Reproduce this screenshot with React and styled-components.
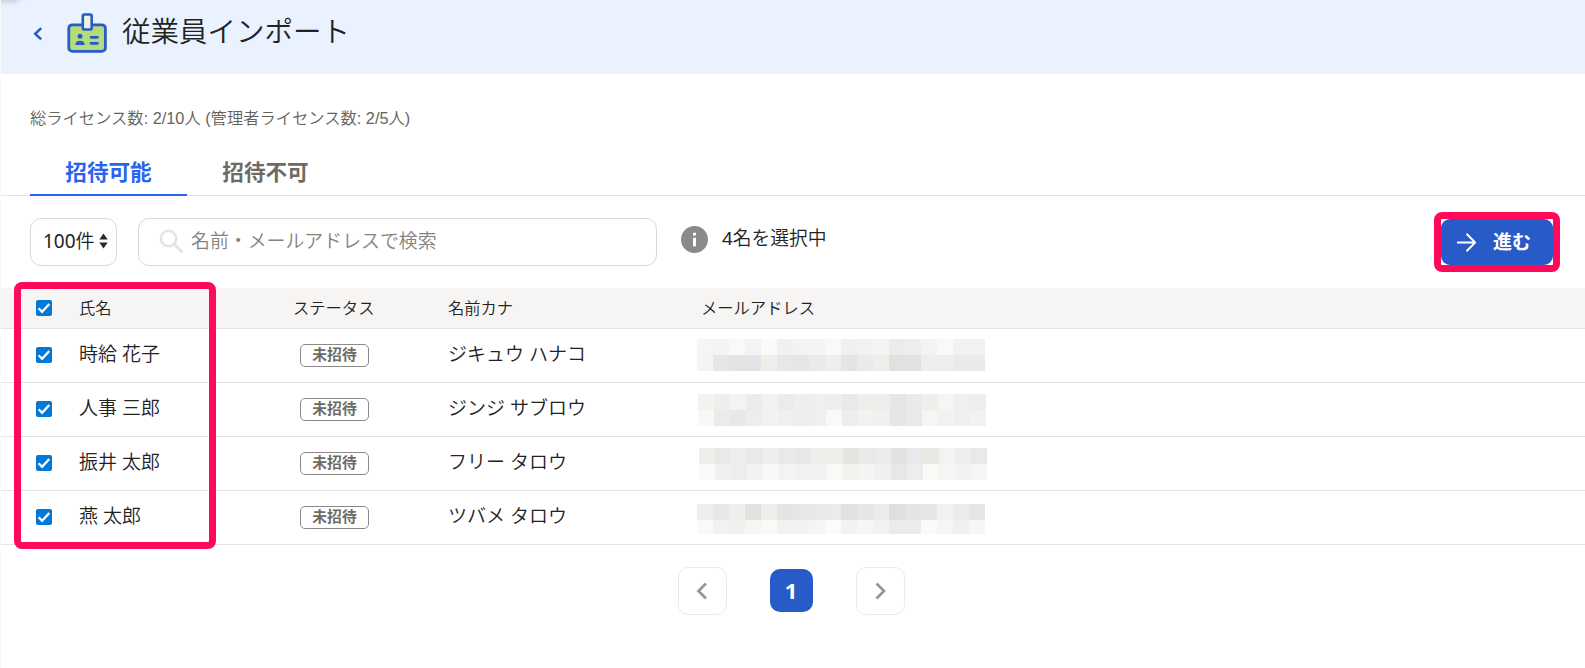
import React from "react";
import styled, { createGlobalStyle } from "styled-components";

const GlobalStyle = createGlobalStyle`
  * { box-sizing: border-box; }
  body {
    margin: 0;
    background: #fff;
    color: #23221f;
    font-family: "Noto Sans", "Noto Sans CJK JP", sans-serif;
    font-size: 19px;
    font-weight: 350;
  }
`;

const Page = styled.main`
  position: relative;
  height: 668px;
  overflow: hidden;
  border-left: 1px solid #f8f8f9;
`;

const Header = styled.header`
  display: flex;
  align-items: center;
  height: 74px;
  padding-left: 32px;
  background: #eaf2ff;
`;

const CornerShadow = styled.div`
  position: absolute;
  top: -6px;
  left: -10px;
  width: 28px;
  height: 6px;
  border-radius: 4px;
  box-shadow: 0 0 6px rgba(40, 50, 70, 0.35);
`;

const BackIcon = styled.svg`
  margin-top: -7px;
`;

const BadgeIcon = styled.svg`
  margin: -8px 0 0 24px;
`;

const Title = styled.h1`
  margin: -12px 0 0 15px;
  font-size: 28.5px;
  font-weight: 350;
  line-height: 40px;
`;

const License = styled.p`
  margin: 32px 0 0 29px;
  color: #66635c;
  font-family: "Liberation Sans", "Noto Sans CJK JP", sans-serif;
  font-size: 16.3px;
  line-height: 24px;
`;

const Tabs = styled.nav`
  display: flex;
  height: 48px;
  margin-top: 18px;
  padding-left: 29px;
  box-shadow: inset 0 -1px #e3e3e3;
`;

const Tab = styled.div`
  width: 157px;
  padding-top: 8px;
  border-bottom: 2px solid ${(p) => (p.$active ? "#2864f0" : "transparent")};
  color: ${(p) => (p.$active ? "#2864f0" : "#6e6b65")};
  font-size: 21.6px;
  font-weight: 700;
  line-height: 32px;
  text-align: center;
`;

const Toolbar = styled.div`
  display: flex;
  align-items: center;
  height: 92px;
  padding: 0 32px 0 29px;
`;

const Field = styled.div`
  display: flex;
  align-items: center;
  width: ${(p) => p.$width}px;
  height: 48px;
  border: 1px solid #d9d9d9;
  border-radius: 11px;
  line-height: 28px;
`;

const PageSize = styled(Field)`
  padding: 0 0 2px 12px;
  gap: 4px;
`;

const Digits = styled.span`
  font-weight: 400;
`;

const Search = styled(Field)`
  margin-left: 21px;
  padding: 0 0 2px 20px;
  gap: 7px;
  color: #85827f;
  font-size: 18.9px;
`;

const Selection = styled.div`
  display: flex;
  align-items: center;
  gap: 14px;
  margin: -5px auto 0 24px;
  font-size: 18.8px;
  line-height: 28px;
`;

const SelectionText = styled.span`
  margin-top: -3px;
`;

const NextButton = styled.div`
  display: flex;
  align-items: center;
  position: relative;
  width: 112px;
  height: 46px;
  padding-left: 16px;
  gap: 17px;
  border-radius: 9px;
  background: #285ac8;
  color: #fff;
  font-weight: 700;
  line-height: 28px;
`;

const Highlight = styled.div`
  position: absolute;
  top: ${(p) => p.$top}px;
  left: ${(p) => p.$left}px;
  width: ${(p) => p.$width}px;
  height: ${(p) => p.$height}px;
  border: 7px solid #ff0a5a;
  border-radius: 8px;
`;

const Row = styled.div`
  display: grid;
  grid-template-columns: 43px 191px 178px 253px 1fr;
  align-items: center;
  height: 54px;
  padding-left: 35px;
  padding-bottom: 1px;
  border-bottom: 1px solid #e3e3e5;
`;

const HeadRow = styled(Row)`
  height: 41px;
  background: #f7f5f4;
  font-size: 16.3px;
`;

const Cell = styled.div`
  margin-top: -3px;
  line-height: 28px;
`;

const HeadCell = styled.div`
  padding-left: ${(p) => p.$indent || 0}px;
  line-height: 24px;
`;

const Check = styled.div`
  display: flex;
  width: 16px;
  height: 16px;
  border-radius: 2px;
  background: #0078d7;
`;

const Status = styled.div`
  width: 69px;
  height: 23px;
  margin: 1px 0 0 30px;
  border: 1px solid #8c8989;
  border-radius: 5px;
  color: #6e6b65;
  font-size: 14.8px;
  font-weight: 700;
  line-height: 19px;
  text-align: center;
`;

const Mosaic = styled.div`
  display: grid;
  grid-template-columns: repeat(18, 16px);
  grid-template-rows: 16px ${(p) => p.$second}px;
  margin: ${(p) => p.$top}px 0 0 ${(p) => p.$left}px;
`;

const Tile = styled.span`
  background: ${(p) => p.$color};
`;

const Pagination = styled.div`
  display: flex;
  align-items: center;
  justify-content: center;
  gap: 43px;
  margin-top: 22px;
  padding-right: 4px;
`;

const Arrow = styled.div`
  display: flex;
  align-items: center;
  justify-content: center;
  width: 49px;
  height: 48px;
  border: 1px solid #ebebeb;
  border-radius: 10px;
`;

const Current = styled.div`
  width: 43px;
  height: 43px;
  margin-top: -1px;
  border-radius: 10px;
  background: #285ac8;
  color: #fff;
  font-size: 22px;
  font-weight: 700;
  line-height: 42px;
  text-align: center;
`;

const rows = [
  {
    name: "時給 花子", kana: "ジキュウ ハナコ", left: -4, top: 0, second: 16,
    tiles: ["f5f5f5 f4f4f4 f9f9f6 f3f3f3 fafafa f0f0f0 f5f3f1 f4f4f4 f9f9f9 f0f0f0 f2f2f2 f4f4f1 ebebeb eeeeee f3f3f3 f9f9f6 f2f2f2 f2f2f2",
      "f2f5f1 e6e6e6 e4e4e4 e4e4e8 eeeeeb e7e7e7 e5e5e5 ece9ea eeeeee e4e4e4 ece9ea eeeeeb e1e1e1 e2e2e2 eeeeef eeeeee ece9eb ebe9ed"],
  },
  {
    name: "人事 三郎", kana: "ジンジ サブロウ", left: -3, top: 2, second: 16,
    tiles: ["f2f2ef f0edef f3f3f3 e9ebee f2f2f2 ebebeb eeeeee efefef f0edef e9e9e9 eeeeeb ededed e5e5e2 e8ebe9 eeeeeb f5f5f5 efefef ededed",
      "f8f8f5 edeaec e8e8e8 ededf0 f2f2f2 edf0ee eeeeeb efefef f9f9f5 ededed f2f2ef f0f0f0 e6e6e6 e9e9e9 f5f5f2 f2f2f2 edf0ee f2f2f2"],
  },
  {
    name: "振井 太郎", kana: "フリー タロウ", left: -2, top: 2, second: 16,
    tiles: ["eeeeeb e9e9e9 ecedef e9e9ea eeeeee e7eae8 e7e7e7 eeeeeb eeeeeb e5e4e1 e9e9e9 ececed e1e1e1 e8e9ec e8e8e5 f3f3f3 eeeef1 e9e9e9",
      "f9f9f7 f0f0f0 ededed f2f2f3 f8f8f8 f3f3f3 f1f0f3 f2f2f2 faf9f5 f2f2ef f4f4f4 eef1f0 e7e7e7 ededed f9f9f6 f5f5f5 f2f2f2 f5f5f5"],
  },
  {
    name: "燕 太郎", kana: "ツバメ タロウ", left: -4, top: 3, second: 14,
    tiles: ["eeeeeb e8e8e8 eeeeeb e2e2e2 eeeeeb e4e4e4 e7e7e7 e9e9e9 edeaeb e1e1e1 e6e6e6 ebebe8 dfdfdf e2e5e3 e6e6e6 f1f1f1 ebebeb e5e5e5",
      "f9f9f9 f2f2f2 f0f0ee f5f5f2 f9f9f6 f2f2f2 f2f2f2 f5f5f2 fbfbfb f2f2f2 f7f5f6 f3f2f3 ebebe8 ebebeb fafafa f5f5f5 f0f0f3 f7f5f8"],
  },
];

const Checked = () => (
  <Check>
    <svg width="16" height="16" viewBox="0 0 16 16" fill="none" stroke="#fff" strokeWidth="2.3">
      <path d="M2.6 8.300 6.100 11.800 13.300 4" />
    </svg>
  </Check>
);

const Chevron = ({ d }) => (
  <svg width="16" height="18" viewBox="0 0 16 18" fill="none" stroke="#969696" strokeWidth="2.7">
    <path d={d} />
  </svg>
);

export default function App() {
  return (
    <Page>
      <GlobalStyle />
      <Header>
        <CornerShadow />
        <BackIcon width="10" height="14" viewBox="0 0 10 14" fill="none" stroke="#285ac8" strokeWidth="2.5">
          <path d="M8.2 1.2 2.2 6.8 8.2 12.4" />
        </BackIcon>
        <BadgeIcon width="40" height="40" viewBox="0 0 40 40">
          <rect x="1.8" y="11.8" width="36.600" height="26.600" rx="3.5" fill="#b4dc7d" stroke="#285ac8" strokeWidth="2.8" />
          <rect x="15.800" y="1.500" width="8.900" height="15" rx="1.5" fill="#ebf3e1" stroke="#285ac8" strokeWidth="2.6" />
          <circle cx="13" cy="23.200" r="2.500" fill="#285ac8" />
          <path d="M8.500 32v-1.200c0-2 2-3 4.500-3s4.500 1 4.500 3V32z" fill="#285ac8" />
          <path d="M24 24.300h6.500M24 30.300h6.500" stroke="#285ac8" strokeWidth="2.700" strokeLinecap="round" />
        </BadgeIcon>
        <Title>従業員インポート</Title>
      </Header>
      <License>総ライセンス数: 2/10人 (管理者ライセンス数: 2/5人)</License>
      <Tabs>
        <Tab $active>招待可能</Tab>
        <Tab>招待不可</Tab>
      </Tabs>
      <Toolbar>
        <PageSize $width={87}>
          <span><Digits>100</Digits>件</span>
          <svg width="9" height="16" viewBox="0 0 9 16" fill="#2b2a28">
            <path d="M.3 6.500 4.500.5l4.200 6zM.3 9.500l4.200 6 4.200-6z" />
          </svg>
        </PageSize>
        <Search $width={519}>
          <svg width="25" height="25" viewBox="0 0 25 25" fill="none" stroke="#e6e3e3" strokeWidth="2.600">
            <circle cx="9.500" cy="9.500" r="7.700" />
            <path d="m15 15 8.500 8.500" strokeWidth="3" />
          </svg>
          名前・メールアドレスで検索
        </Search>
        <Selection>
          <svg width="27" height="27" viewBox="0 0 27 27">
            <circle cx="13.500" cy="13.500" r="13.500" fill="#8c8989" />
            <path d="M12 6.800h3v2.700h-3zM12 11.800h3v8.400h-3z" fill="#fff" />
          </svg>
          <SelectionText><Digits>4</Digits>名を選択中</SelectionText>
        </Selection>
        <NextButton>
          <svg width="19" height="19" viewBox="0 0 19 19" fill="none" stroke="#fff" strokeWidth="2">
            <path d="M0 9.500h18M9.500.8l8.700 8.700-8.700 8.700" />
          </svg>
          進む
          <Highlight $top={-7} $left={-7} $width={126} $height={60} />
        </NextButton>
      </Toolbar>
      <HeadRow>
        <Checked />
        <HeadCell>氏名</HeadCell>
        <HeadCell $indent={23}>ステータス</HeadCell>
        <HeadCell>名前カナ</HeadCell>
        <HeadCell>メールアドレス</HeadCell>
      </HeadRow>
      {rows.map((r) => (
        <Row key={r.name}>
          <Checked />
          <Cell>{r.name}</Cell>
          <Status>未招待</Status>
          <Cell>{r.kana}</Cell>
          <Mosaic $left={r.left} $top={r.top} $second={r.second}>
            {r.tiles.join(" ").split(" ").map((c, i) => (
              <Tile key={i} $color={`#${c}`} />
            ))}
          </Mosaic>
        </Row>
      ))}
      <Pagination>
        <Arrow><Chevron d="M12 1.500 4.500 9l7.500 7.500" /></Arrow>
        <Current>1</Current>
        <Arrow><Chevron d="m4.500 1.500 7.500 7.500-7.500 7.500" /></Arrow>
      </Pagination>
      <Highlight $top={282} $left={13} $width={202} $height={267} />
    </Page>
  );
}
